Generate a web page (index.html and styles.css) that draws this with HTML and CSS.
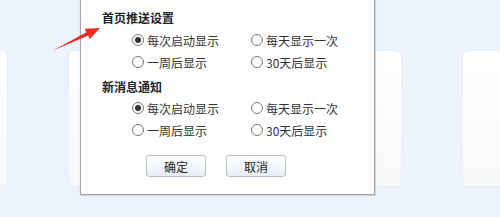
FILE: index.html
```html
<!DOCTYPE html>
<html lang="zh-CN">
<head>
  <meta charset="UTF-8" />
  <title>推送设置</title>
  <link rel="stylesheet" href="styles.css">
</head>
<body>
  <div class="stage">
    <div class="cards">
      <div class="card"></div>
      <div class="card"></div>
      <div class="card"></div>
      <div class="card"></div>
    </div>
  </div>

  <div class="dialog">
    <h2>首页推送设置</h2>
    <div class="options">
      <label class="opt"><span class="radio checked"></span>每次启动显示</label>
      <label class="opt"><span class="radio"></span>每天显示一次</label>
      <label class="opt"><span class="radio"></span>一周后显示</label>
      <label class="opt"><span class="radio"></span>30天后显示</label>
    </div>
    <h2 class="second">新消息通知</h2>
    <div class="options">
      <label class="opt"><span class="radio checked"></span>每次启动显示</label>
      <label class="opt"><span class="radio"></span>每天显示一次</label>
      <label class="opt"><span class="radio"></span>一周后显示</label>
      <label class="opt"><span class="radio"></span>30天后显示</label>
    </div>
    <div class="actions">
      <button>确定</button>
      <button>取消</button>
    </div>
  </div>

  <svg class="arrow" width="500" height="217" viewBox="0 0 500 217">
    <polygon points="53,50.5 86.4,32.2 84.8,28.8 100,28 89.8,39 88.2,35.6" fill="#ee2a24" />
  </svg>
</body>
</html>
```

FILE: styles.css
```css
body {
  margin: 0;
  width: 500px;
  height: 217px;
  overflow: hidden;
  position: relative;
  background: #edf3fc;
  font-family: "Noto Sans CJK SC", "Noto Sans", sans-serif;
  color: #333;
}
.stage {
  width: 500px;
  height: 217px;
  overflow: hidden;
}
.cards {
  display: flex;
  gap: 62px;
  margin-left: -128px;
  padding-top: 51px;
}
.card {
  flex: 0 0 135px;
  height: 135px;
  border-radius: 5px;
  background: linear-gradient(#ffffff, #f6f8fa);
  box-shadow: 0 0 1px rgba(180, 190, 205, 0.6);
}
.dialog {
  position: absolute;
  left: 80px;
  top: -1px;
  width: 295px;
  height: 196px;
  box-sizing: border-box;
  background: #fff;
  border: 1px solid #a4a4a4;
  box-shadow: 1px 1px 0 #d2d2d2, 0 0 3px rgba(0, 0, 0, 0.08);
  padding: 9px 0 16px 21px;
}
.dialog h2 {
  margin: 0;
  font-size: 12px;
  line-height: 18px;
  font-weight: bold;
  color: #222;
}
.dialog h2.second {
  margin-top: 5px;
}
.options {
  display: grid;
  grid-template-columns: 119px 119px;
  margin: 2px 0 0 30px;
}
.second + .options {
  margin-top: 1px;
}
.opt {
  display: flex;
  align-items: center;
  height: 22px;
  font-size: 12px;
  color: #333;
}
.radio {
  width: 10px;
  height: 10px;
  border: 1px solid #777;
  border-radius: 50%;
  margin-right: 3px;
  background: #fff;
  display: flex;
  align-items: center;
  justify-content: center;
}
.radio.checked::after {
  content: "";
  width: 6px;
  height: 6px;
  border-radius: 50%;
  background: #333;
}
.actions {
  display: flex;
  gap: 20px;
  margin: 14px 0 0 44px;
}
.actions button {
  width: 60px;
  height: 22px;
  padding: 0;
  font-family: inherit;
  font-size: 12px;
  color: #222;
  border: 1px solid #b7c0cf;
  border-radius: 3px;
  background: linear-gradient(#ffffff, #e7edf6);
}
.arrow {
  position: absolute;
  left: 0;
  top: 0;
}
```
